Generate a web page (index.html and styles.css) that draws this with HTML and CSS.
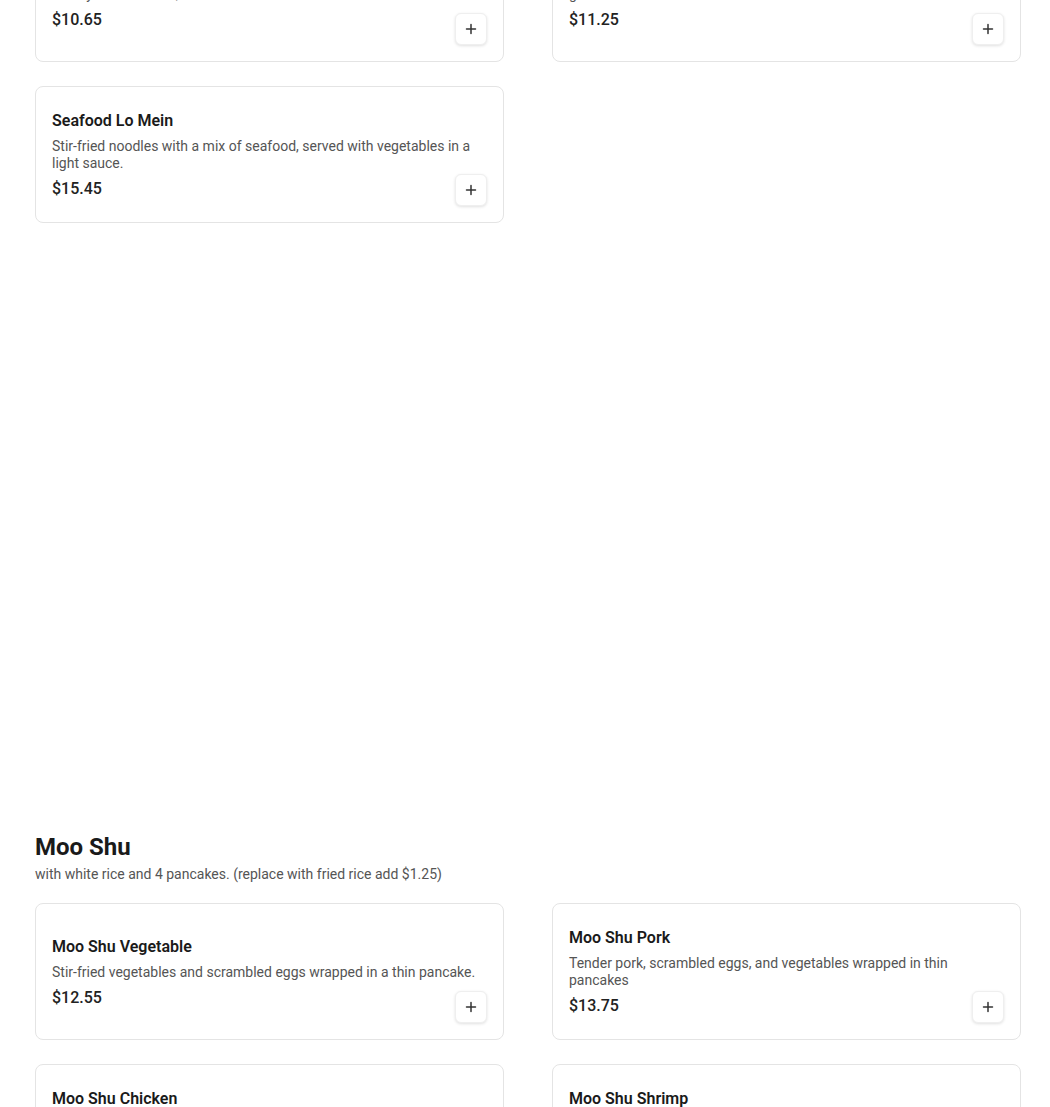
FILE: index.html
```html
<!DOCTYPE html>
<html lang="en">
<head>
  <meta charset="UTF-8" />
  <meta name="viewport" content="width=device-width, initial-scale=1.0"/>
  <title>Menu</title>
  <link rel="stylesheet" href="styles.css">
</head>
<body>
  <div class="menu">
    <section class="section section-lo-mein">
      <div class="grid">
        <div class="card card-tall">
          <div class="card-body">
            <h3 class="card-title">Shrimp Lo Mein</h3>
            <p class="card-desc">Soft egg noodles tossed with shrimp, cabbage, bean sprouts, and a savory brown sauce, finished with scallions</p>
            <p class="card-price">$10.65</p>
          </div>
          <button class="add-btn" aria-label="Add">
            <svg width="12" height="12" viewBox="0 0 12 12"><path d="M6 1.5v9M1.5 6h9" stroke="#333" stroke-width="1.5" stroke-linecap="round"/></svg>
          </button>
        </div>
        <div class="card card-tall">
          <div class="card-body">
            <h3 class="card-title">Beef Lo Mein</h3>
            <p class="card-desc">Tender sliced beef with egg noodles, onions and carrots in a rich soy glaze.</p>
            <p class="card-price">$11.25</p>
          </div>
          <button class="add-btn" aria-label="Add">
            <svg width="12" height="12" viewBox="0 0 12 12"><path d="M6 1.5v9M1.5 6h9" stroke="#333" stroke-width="1.5" stroke-linecap="round"/></svg>
          </button>
        </div>
        <div class="card">
          <div class="card-body">
            <h3 class="card-title">Seafood Lo Mein</h3>
            <p class="card-desc">Stir-fried noodles with a mix of seafood, served with vegetables in a light sauce.</p>
            <p class="card-price">$15.45</p>
          </div>
          <button class="add-btn" aria-label="Add">
            <svg width="12" height="12" viewBox="0 0 12 12"><path d="M6 1.5v9M1.5 6h9" stroke="#333" stroke-width="1.5" stroke-linecap="round"/></svg>
          </button>
        </div>
      </div>
    </section>

    <section class="section section-moo-shu">
      <h2 class="section-title">Moo Shu</h2>
      <p class="section-note">with white rice and 4 pancakes. (replace with fried rice add $1.25)</p>
      <div class="grid">
        <div class="card">
          <div class="card-body">
            <h3 class="card-title">Moo Shu Vegetable</h3>
            <p class="card-desc">Stir-fried vegetables and scrambled eggs wrapped in a thin pancake.</p>
            <p class="card-price">$12.55</p>
          </div>
          <button class="add-btn" aria-label="Add">
            <svg width="12" height="12" viewBox="0 0 12 12"><path d="M6 1.5v9M1.5 6h9" stroke="#333" stroke-width="1.5" stroke-linecap="round"/></svg>
          </button>
        </div>
        <div class="card">
          <div class="card-body">
            <h3 class="card-title">Moo Shu Pork</h3>
            <p class="card-desc">Tender pork, scrambled eggs, and vegetables wrapped in thin pancakes</p>
            <p class="card-price">$13.75</p>
          </div>
          <button class="add-btn" aria-label="Add">
            <svg width="12" height="12" viewBox="0 0 12 12"><path d="M6 1.5v9M1.5 6h9" stroke="#333" stroke-width="1.5" stroke-linecap="round"/></svg>
          </button>
        </div>
        <div class="card">
          <div class="card-body">
            <h3 class="card-title">Moo Shu Chicken</h3>
            <p class="card-desc">Sliced chicken, scrambled eggs, and vegetables wrapped in thin pancakes with hoisin sauce</p>
            <p class="card-price">$13.75</p>
          </div>
          <button class="add-btn" aria-label="Add">
            <svg width="12" height="12" viewBox="0 0 12 12"><path d="M6 1.5v9M1.5 6h9" stroke="#333" stroke-width="1.5" stroke-linecap="round"/></svg>
          </button>
        </div>
        <div class="card">
          <div class="card-body">
            <h3 class="card-title">Moo Shu Shrimp</h3>
            <p class="card-desc">Shrimp, scrambled eggs, and vegetables wrapped in thin pancakes with hoisin sauce</p>
            <p class="card-price">$14.95</p>
          </div>
          <button class="add-btn" aria-label="Add">
            <svg width="12" height="12" viewBox="0 0 12 12"><path d="M6 1.5v9M1.5 6h9" stroke="#333" stroke-width="1.5" stroke-linecap="round"/></svg>
          </button>
        </div>
      </div>
    </section>
  </div>
</body>
</html>
```

FILE: styles.css
```css
body {
  font-family: Roboto, "Liberation Sans", sans-serif;
  background: #fff;
  color: #1a1a1a;
  margin: 0;
  padding: 0;
  overflow: hidden;
}

.menu {
  width: 986px;
  padding-left: 35px;
}

/* page is shown scrolled part way down */
.section-lo-mein {
  margin-top: -92px;
}

.section-moo-shu {
  margin-top: 610px;
}

.section-title {
  font-size: 24px;
  line-height: 28px;
  font-weight: 700;
  margin: 0;
  color: #1a1a1a;
}

.section-note {
  font-size: 14px;
  line-height: 17px;
  color: #555;
  margin: 5px 0 20px;
}

.grid {
  display: grid;
  grid-template-columns: 1fr 1fr;
  column-gap: 48px;
  row-gap: 24px;
}

.card {
  position: relative;
  border: 1px solid #e4e4e4;
  border-radius: 8px;
  padding: 24px 16px 23px;
  display: flex;
  flex-direction: column;
  justify-content: center;
  background: #fff;
}

.card-tall {
  min-height: 105px;
}

.card-title {
  font-size: 16px;
  line-height: 20px;
  font-weight: 600;
  margin: 0;
  color: #1a1a1a;
}

.card-desc {
  font-size: 14px;
  line-height: 17px;
  color: #555;
  margin: 7px 0 0;
}

.card-price {
  font-size: 16px;
  line-height: 20px;
  font-weight: 500;
  color: #222;
  margin: 7px 0 0;
}

.add-btn {
  position: absolute;
  right: 16px;
  bottom: 16px;
  width: 32px;
  height: 32px;
  padding: 0;
  border: 1px solid #efefef;
  border-radius: 6px;
  background: #fff;
  box-shadow: 0 1px 3px rgba(0, 0, 0, 0.12);
  display: flex;
  align-items: center;
  justify-content: center;
  cursor: pointer;
}
```
